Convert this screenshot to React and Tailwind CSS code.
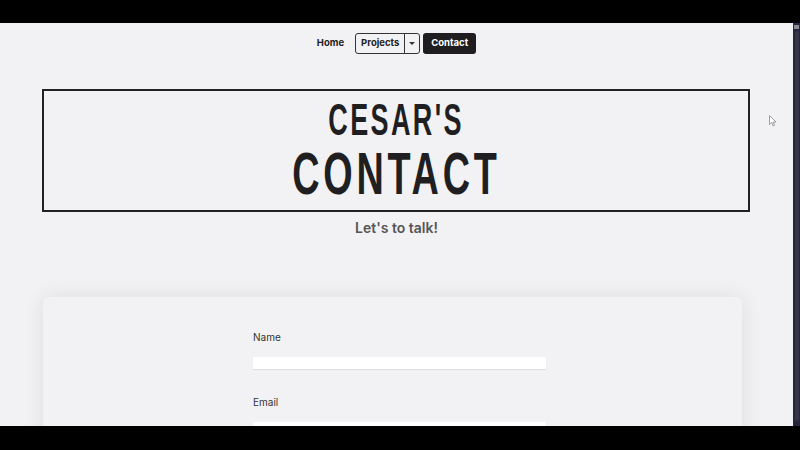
import React from "react";

const sans = "font-['Inter','Liberation_Sans',sans-serif]";

function Nav() {
  return (
    <nav className={`flex justify-center items-center pt-[10px] ${sans}`}>
      <div className="flex items-center h-[21px]">
        <a className="text-[9.5px] font-bold text-[#222] mr-[11px]">Home</a>
        <div className="flex h-[21px] border border-[#333] rounded-[3px] overflow-hidden">
          <span className="flex items-center px-[5px] text-[9.5px] font-bold text-[#222]">Projects</span>
          <span className="flex items-center justify-center w-[15px] border-l border-[#333]">
            <svg width="6" height="3" viewBox="0 0 6 3">
              <path d="M0 0 L6 0 L3 3 Z" fill="#333" />
            </svg>
          </span>
        </div>
        <a className="ml-[3px] flex items-center h-[21px] px-[8px] rounded-[3px] bg-[#1f1d1f] text-white text-[9.5px] font-bold">
          Contact
        </a>
      </div>
    </nav>
  );
}

function Header() {
  return (
    <header className="mt-[35px] ml-[42px] mr-[43px] border-2 border-[#222] pt-[7px] pb-[6px] text-center text-[#1f1f22] font-['Liberation_Sans',sans-serif] font-bold">
      <div className="text-[45px] leading-[44px] tracking-[4px]">
        <span className="inline-block scale-x-[0.6]">CESAR'S</span>
      </div>
      <div className="text-[60px] leading-[60px] tracking-[6px] mt-[2px]">
        <span className="inline-block scale-x-[0.63]">CONTACT</span>
      </div>
    </header>
  );
}

function Field({ label }) {
  return (
    <div className="mb-[27px]">
      <label className={`block text-[10px] text-[#333] leading-[12px] ${sans}`}>{label}</label>
      <div className="mt-[14px] w-[293px] h-[12px] bg-white shadow-[0_1px_1px_rgba(0,0,0,0.08)]" />
    </div>
  );
}

export default function App() {
  return (
    <div className="w-[800px] h-[450px] bg-black flex flex-col overflow-hidden">
      <div className="h-[23px] shrink-0" />
      <div className="h-[403px] flex">
        <main className="relative flex-1 bg-[#f2f2f5] overflow-hidden">
          <Nav />
          <Header />
          <p className={`mt-[6px] text-center text-[14px] leading-[20px] font-semibold text-[#555] ${sans}`}>
            Let's to talk!
          </p>
          <section className="mt-[59px] ml-[43px] w-[699px] h-[200px] rounded-[6px] bg-[#f2f2f5] shadow-[0_0_22px_rgba(0,0,0,0.09)] pt-[34px] pl-[210px]">
            <Field label="Name" />
            <Field label="Email" />
          </section>
          <svg className="absolute left-[769px] top-[92px]" width="8" height="12" viewBox="0 0 8 12">
            <path d="M0.5 0.5 L0.5 9.5 L2.7 7.5 L4.2 11 L5.5 10.4 L4 7 L7 7 Z" fill="#fff" stroke="#888" strokeWidth="0.8" />
          </svg>
        </main>
        <div className="w-[7px] bg-[#24253a] flex flex-col items-center pt-[2px]">
          <div className="w-[5px] h-[4px] bg-[#8a8b95]" />
          <div className="mt-[2px] w-[4px] h-[390px] bg-[#33354a] rounded-full" />
        </div>
      </div>
      <div className="h-[24px] shrink-0" />
    </div>
  );
}
